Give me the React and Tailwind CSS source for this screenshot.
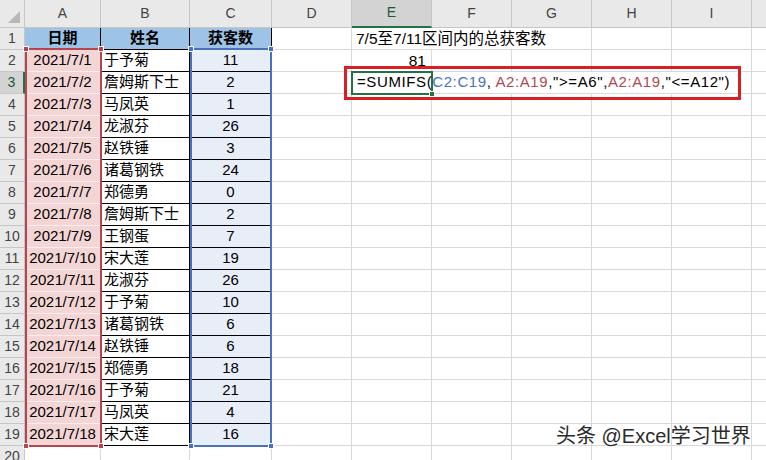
import React from 'react';

const rows = [
  ['2021/7/1', '于予菊', 11],
  ['2021/7/2', '詹姆斯下士', 2],
  ['2021/7/3', '马凤英', 1],
  ['2021/7/4', '龙淑芬', 26],
  ['2021/7/5', '赵铁锤', 3],
  ['2021/7/6', '诸葛钢铁', 24],
  ['2021/7/7', '郑德勇', 0],
  ['2021/7/8', '詹姆斯下士', 2],
  ['2021/7/9', '王钢蛋', 7],
  ['2021/7/10', '宋大莲', 19],
  ['2021/7/11', '龙淑芬', 26],
  ['2021/7/12', '于予菊', 10],
  ['2021/7/13', '诸葛钢铁', 6],
  ['2021/7/14', '赵铁锤', 6],
  ['2021/7/15', '郑德勇', 18],
  ['2021/7/16', '于予菊', 21],
  ['2021/7/17', '马凤英', 4],
  ['2021/7/18', '宋大莲', 16],
];

const letters = ['A', 'B', 'C', 'D', 'E', 'F', 'G', 'H', 'I', 'J'];

// gridlines hidden where text spills over (row -> set of column indexes)
const noRight = {
  1: [5, 6],
  3: [5, 6, 7, 8],
};

const Corner = () => (
  <div className="bg-[#e9e9e9] border-r border-b border-[#c6c6c6] relative">
    <svg width="14" height="14" viewBox="0 0 14 14" className="absolute right-[3px] bottom-[3px]">
      <polygon points="13,1 13,13 1,13" fill="#b8b8b8" />
    </svg>
  </div>
);

const ColHead = ({ label, active }) => (
  <div
    className={`flex items-end justify-center pb-[3px] text-[14px] border-r border-[#c6c6c6] ${
      active
        ? 'bg-[#d3d3d3] border-b-2 border-b-[#217346] text-[#1e5c38]'
        : 'bg-[#e9e9e9] border-b border-b-[#c6c6c6] text-[#444]'
    }`}
  >
    {label}
  </div>
);

const RowHead = ({ n, active }) => (
  <div
    className={`flex items-center justify-center text-[14px] border-b border-[#c6c6c6] ${
      active
        ? 'bg-[#d3d3d3] border-r-2 border-r-[#217346] text-[#1e5c38]'
        : 'bg-[#e9e9e9] border-r border-r-[#c6c6c6] text-[#444]'
    }`}
  >
    {n}
  </div>
);

const Cell = ({ className = '', children }) => (
  <div className={`flex items-center whitespace-nowrap overflow-visible ${className}`}>{children}</div>
);

const Formula = () => (
  <span className="tracking-[0.6px]">
    =SUMIFS(<span className="text-[#4472c4]">C2:C19</span>,{' '}
    <span className="text-[#b4464f]">A2:A19</span>,"&gt;=A6",
    <span className="text-[#b4464f]">A2:A19</span>,"&lt;=A12")
  </span>
);

const Square = ({ className }) => (
  <div className={`absolute w-[6px] h-[6px] border border-white ${className}`} />
);

export default function App() {
  const body = [];

  for (let r = 1; r <= 20; r++) {
    body.push(<RowHead key={`h${r}`} n={r} active={r === 3} />);
    for (let c = 1; c <= 10; c++) {
      const key = `${r}-${c}`;
      const hideRight = (noRight[r] || []).includes(c);
      const grid = `border-b border-b-[#d9d9d9] ${hideRight ? '' : 'border-r border-r-[#d9d9d9]'}`;

      if (r === 1 && c <= 3) {
        body.push(
          <Cell key={key} className="justify-center font-bold bg-[#9dc3e6] border-r border-b border-black">
            {['日期', '姓名', '获客数'][c - 1]}
          </Cell>
        );
      } else if (r >= 2 && r <= 19 && c === 1) {
        body.push(
          <Cell
            key={key}
            className={`justify-center bg-[#f3d5d5] border-r border-black ${
              r === 19 ? 'border-b border-b-black' : 'border-b border-b-[#fbeeee]'
            }`}
          >
            {rows[r - 2][0]}
          </Cell>
        );
      } else if (r >= 2 && r <= 19 && c === 2) {
        body.push(
          <Cell key={key} className="pl-[3px] border-r border-b border-black">
            {rows[r - 2][1]}
          </Cell>
        );
      } else if (r >= 2 && r <= 19 && c === 3) {
        body.push(
          <Cell key={key} className="justify-center bg-[#e8eef8] border-r border-b border-black">
            {rows[r - 2][2]}
          </Cell>
        );
      } else if (r === 1 && c === 5) {
        body.push(
          <Cell key={key} className={`pl-[4px] text-[15.5px] ${grid}`}>
            7/5至7/11区间内的总获客数
          </Cell>
        );
      } else if (r === 2 && c === 5) {
        body.push(
          <Cell key={key} className={`justify-end pr-[5px] text-[15.5px] ${grid}`}>
            81
          </Cell>
        );
      } else if (r === 3 && c === 5) {
        body.push(
          <Cell key={key} className={`pl-[5px] ${grid}`}>
            <Formula />
          </Cell>
        );
      } else {
        body.push(<Cell key={key} className={grid} />);
      }
    }
  }

  return (
    <div className="relative w-[766px] h-[460px] overflow-hidden bg-white text-black text-[15px] font-['Liberation_Sans','Noto_Sans_CJK_SC',sans-serif]">
      <div className="grid grid-cols-[25px_76px_89px_82px_80px_80px_80px_80px_80px_80px_80px] grid-rows-[28px_repeat(20,22px)]">
        <Corner />
        {letters.map((l) => (
          <ColHead key={l} label={l} active={l === 'E'} />
        ))}
        {body}
      </div>

      {/* reference highlight A2:A19 */}
      <div className="absolute left-[25px] top-[48px] w-[77px] h-[399px] border-2 border-[#b4464f]" />
      <Square className="left-[23px] top-[46px] bg-[#b4464f]" />
      <Square className="left-[98px] top-[46px] bg-[#b4464f]" />
      <Square className="left-[23px] top-[443px] bg-[#b4464f]" />
      <Square className="left-[98px] top-[443px] bg-[#b4464f]" />

      {/* reference highlight C2:C19 */}
      <div className="absolute left-[190px] top-[48px] w-[82px] h-[399px] border-2 border-[#4a72b8]" />
      <Square className="left-[188px] top-[46px] bg-[#4a72b8]" />
      <Square className="left-[268px] top-[46px] bg-[#4a72b8]" />
      <Square className="left-[188px] top-[443px] bg-[#4a72b8]" />
      <Square className="left-[268px] top-[443px] bg-[#4a72b8]" />

      {/* red annotation box */}
      <div className="absolute left-[344px] top-[66px] w-[397px] h-[34px] border-[3px] border-[#d91e25]" />

      {/* active cell E3 */}
      <div className="absolute left-[351px] top-[71px] w-[82px] h-[24px] border-2 border-[#217346]" />
      <div className="absolute left-[429px] top-[91px] w-[6px] h-[6px] bg-[#217346] border border-white" />

      {/* watermark */}
      <div className="absolute left-[556px] top-[421px] text-[20px] text-[#2b2b2b] whitespace-nowrap [text-shadow:0_0_2px_#fff,0_0_2px_#fff]">
        头条 @Excel学习世界
      </div>
    </div>
  );
}
